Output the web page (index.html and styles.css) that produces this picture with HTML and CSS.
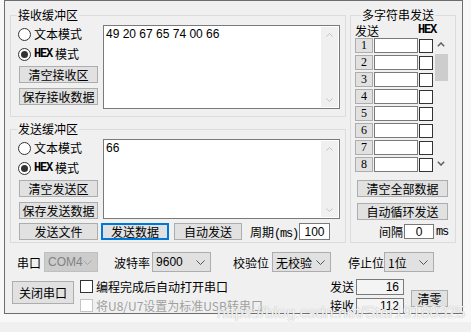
FILE: index.html
```html
<!DOCTYPE html>
<html>
<head>
<meta charset="utf-8">
<meta name="viewport" content="width=device-width, initial-scale=1.0">
<title>串口助手</title>
<link rel="stylesheet" href="styles.css">
</head>
<body>

<div class="frame">

<div class="top">
  <div class="left">

    <fieldset class="group recv">
      <legend>接收缓冲区</legend>
      <div class="pane">
        <div class="side">
          <div class="radio"><span class="dot"></span>文本模式</div>
          <div class="radio"><span class="dot on"></span><span class="sim">HEX</span>模式</div>
          <button class="btn b1">清空接收区</button>
          <button class="btn b2">保存接收数据</button>
        </div>
        <div class="textbox">
          <div class="text">49 20 67 65 74 00 66</div>
          <div class="vscroll">
            <svg width="7" height="4" viewBox="0 0 7 4"><polyline points="0.5,3.5 3.5,0.5 6.5,3.5"/></svg>
            <svg width="7" height="4" viewBox="0 0 7 4"><polyline points="0.5,0.5 3.5,3.5 6.5,0.5"/></svg>
          </div>
        </div>
      </div>
    </fieldset>

    <fieldset class="group send">
      <legend>发送缓冲区</legend>
      <div class="pane">
        <div class="side">
          <div class="radio"><span class="dot"></span>文本模式</div>
          <div class="radio"><span class="dot on"></span><span class="sim">HEX</span>模式</div>
          <button class="btn b1">清空发送区</button>
          <button class="btn b2">保存发送数据</button>
        </div>
        <div class="textbox">
          <div class="text">66</div>
          <div class="vscroll">
            <svg width="7" height="4" viewBox="0 0 7 4"><polyline points="0.5,3.5 3.5,0.5 6.5,3.5"/></svg>
            <svg width="7" height="4" viewBox="0 0 7 4"><polyline points="0.5,0.5 3.5,3.5 6.5,0.5"/></svg>
          </div>
        </div>
      </div>
      <div class="sendrow">
        <button class="btn file">发送文件</button>
        <button class="btn short focus">发送数据</button>
        <button class="btn short">自动发送</button>
        <span class="period">周期<span class="sim">(ms)</span></span>
        <input class="edit pval" value="100">
      </div>
    </fieldset>

  </div>

  <fieldset class="group multi">
    <legend>多字符串发送</legend>
    <div class="mhead"><span>发送</span><span class="sim hexh">HEX</span></div>
    <div class="mlist">
      <div class="rows">
        <div class="mrow"><span class="num">1</span><input class="edit mtext"><span class="check"></span></div>
        <div class="mrow"><span class="num">2</span><input class="edit mtext"><span class="check"></span></div>
        <div class="mrow"><span class="num">3</span><input class="edit mtext"><span class="check"></span></div>
        <div class="mrow"><span class="num">4</span><input class="edit mtext"><span class="check"></span></div>
        <div class="mrow"><span class="num">5</span><input class="edit mtext"><span class="check"></span></div>
        <div class="mrow"><span class="num">6</span><input class="edit mtext"><span class="check"></span></div>
        <div class="mrow"><span class="num">7</span><input class="edit mtext"><span class="check"></span></div>
        <div class="mrow"><span class="num">8</span><input class="edit mtext"><span class="check"></span></div>
      </div>
      <div class="mscroll">
        <svg class="up" width="8" height="5" viewBox="0 0 8 5"><polyline points="0.8,4.2 4,1 7.2,4.2"/></svg>
        <div class="thumb"></div>
        <svg class="down" width="8" height="5" viewBox="0 0 8 5"><polyline points="0.8,0.8 4,4 7.2,0.8"/></svg>
      </div>
    </div>
    <button class="btn mbtn first">清空全部数据</button>
    <button class="btn mbtn second">自动循环发送</button>
    <div class="interval"><span>间隔</span><input class="edit ival" value="0"><span class="sim">ms</span></div>
  </fieldset>
</div>

<div class="portrow">
  <span>串口</span>
  <div class="select dis com"><span class="sans">COM4</span><svg class="caret" width="9" height="5" viewBox="0 0 9 5"><polyline points="0.5,0.5 4.5,4.5 8.5,0.5"/></svg></div>
  <span class="lbl baud">波特率</span>
  <div class="select mid s-baud"><span class="sans">9600</span><svg class="caret" width="9" height="5" viewBox="0 0 9 5"><polyline points="0.5,0.5 4.5,4.5 8.5,0.5"/></svg></div>
  <span class="lbl parity">校验位</span>
  <div class="select mid s-parity"><span>无校验</span><svg class="caret" width="9" height="5" viewBox="0 0 9 5"><polyline points="0.5,0.5 4.5,4.5 8.5,0.5"/></svg></div>
  <span class="lbl stop">停止位</span>
  <div class="select s-stop"><span>1位</span><svg class="caret" width="9" height="5" viewBox="0 0 9 5"><polyline points="0.5,0.5 4.5,4.5 8.5,0.5"/></svg></div>
</div>

<div class="ctrlrow">
  <button class="btn close">关闭串口</button>
  <div class="checks">
    <div class="crow"><span class="check"></span>编程完成后自动打开串口</div>
    <div class="crow dis"><span class="check"></span>将U8/U7设置为标准USB转串口</div>
  </div>
  <div class="counters">
    <div class="cnt"><span>发送</span><input class="edit cval" value="16" readonly></div>
    <div class="cnt"><span>接收</span><input class="edit cval" value="112" readonly></div>
  </div>
  <button class="btn zero">清零</button>
</div>

<!-- watermark from the original screenshot -->
<div class="watermark">https://blog.csdn.net/Star19180325</div>

</div>

</body>
</html>
```

FILE: styles.css
```css
* {box-sizing: border-box;}

html {background: #f0f0f0;}

body {
  margin: 0;
  height: 322px;
  background: #f8f8f8;
  font-family: "Noto Sans CJK SC", sans-serif;
  font-size: 12px;
  color: #000;
}

.frame {
  position: relative;
  margin-left: 4px;
  width: 459px;
  height: 314px;
  border: 1px solid #6d6d6d;
  background: #f0f0f0;
}

.top {
  display: flex;
  gap: 4px;
  padding: 7px 0 0 5px;
}

.left {
  width: 336px;
  display: flex;
  flex-direction: column;
  gap: 5px;
}

/* group boxes */
.group {
  margin: 0;
  min-width: 0;
  border: 1px solid #dcdcdc;
  padding: 0 4px 0 7px;
}

.group legend {
  padding: 0 1px;
  margin-left: -1px;
  height: 14px;
  line-height: 14px;
}

.recv {height: 109px;}
.send {height: 121px;}

.multi {
  width: 106px;
  height: 235px;
  padding: 0 4px;
}

.multi legend {margin-left: 6px;}

.sim {
  font-family: "Liberation Mono", monospace;
  font-size: 12px;
  font-weight: bold;
  letter-spacing: -1.2px;
}

.sans {font-family: "Liberation Sans", sans-serif;}

.pane {
  display: flex;
  padding-top: 3px;
}

.side {
  width: 80px;
  margin-top: -1px;
  display: flex;
  flex-direction: column;
}

.radio {
  display: flex;
  align-items: center;
  gap: 3px;
  height: 20px;
  line-height: 14px;
}

.dot {
  width: 13px;
  height: 13px;
  border: 1px solid #333;
  border-radius: 50%;
  background: #fff;
  display: flex;
  align-items: center;
  justify-content: center;
}

.dot.on::after {
  content: "";
  width: 7px;
  height: 7px;
  border-radius: 50%;
  background: #333;
}

.btn {
  font-family: inherit;
  font-size: 12px;
  color: #000;
  background: #e1e1e1;
  border: 1px solid #adadad;
  padding: 0;
  margin: 0;
  height: 17px;
  line-height: 15px;
}

.side .btn {
  width: 79px;
  margin-left: 1px;
}

.side .b1 {margin-top: 2px;}
.side .b2 {margin-top: 5px;}

.textbox {
  margin-left: 5px;
  width: 237px;
  height: 84px;
  border: 1px solid #7a7a7a;
  background: #fff;
  padding: 1px;
  display: flex;
}

.send .textbox {height: 80px;}

.text {
  flex: 1;
  padding: 0 1px;
  font-family: "Liberation Sans", sans-serif;
  font-size: 12px;
  line-height: 14px;
}

.vscroll {
  width: 17px;
  background: #f0f0f0;
  display: flex;
  flex-direction: column;
  align-items: center;
  justify-content: space-between;
  padding: 6px 0 5px;
}

.vscroll polyline {
  fill: none;
  stroke: #c2c2c2;
}

.sendrow {
  display: flex;
  align-items: center;
  height: 17px;
  margin-top: 4px;
}

.file {
  width: 79px;
  margin-left: 1px;
}

.short {
  width: 68px;
  margin-left: 3px;
}

.short + .short {margin-left: 5px;}

.focus {
  border-color: #0078d7;
  box-shadow: inset 0 0 0 1px #0078d7;
}

.period {margin-left: 8px;}

.period .sim {font-weight: normal;}

.edit {
  font-family: "Liberation Sans", sans-serif;
  font-size: 12px;
  color: #000;
  border: 1px solid #7a7a7a;
  background: #fff;
  padding: 0 2px;
  margin: 0;
  height: 15px;
  outline: none;
}

.pval {
  width: 31px;
  height: 17px;
  margin-left: 1px;
  text-align: center;
}

/* multi string panel */
.mhead {
  display: flex;
  align-items: center;
  height: 13px;
  line-height: 13px;
  margin-top: 2px;
}

.hexh {margin-left: 39px;}

.mlist {
  display: flex;
  margin-top: 1px;
}

.rows {
  display: flex;
  flex-direction: column;
  gap: 2px;
}

.mrow {
  display: flex;
  align-items: center;
  gap: 1px;
  height: 15px;
}

.num {
  width: 18px;
  height: 15px;
  background: #e1e1e1;
  border: 1px solid #adadad;
  font-family: "Liberation Serif", serif;
  font-size: 12px;
  line-height: 13px;
  text-align: center;
}

.mtext {width: 44px;}

.check {
  width: 14px;
  height: 14px;
  border: 1px solid #333;
  background: #fff;
  flex: none;
}

.mscroll {
  width: 14px;
  height: 134px;
  margin-left: 1px;
  display: flex;
  flex-direction: column;
  align-items: center;
}

.mscroll polyline {
  fill: none;
  stroke: #606060;
  stroke-width: 1.5;
}

.mscroll .up {margin-top: 4px;}

.thumb {
  width: 13px;
  height: 27px;
  margin-top: 7px;
  background: #cdcdcd;
}

.mscroll .down {
  margin-top: auto;
  margin-bottom: 6px;
}

.mbtn {
  display: block;
  width: 91px;
  margin-left: 2px;
}

.mbtn.first {margin-top: 8px;}
.mbtn.second {margin-top: 6px;}

.interval {
  display: flex;
  align-items: center;
  height: 15px;
  margin-top: 4px;
  padding-left: 24px;
}

.ival {
  width: 30px;
  margin-left: 1px;
  text-align: center;
}

.interval .sim {
  margin-left: 2px;
  font-weight: normal;
}

/* port settings */
.portrow {
  display: flex;
  align-items: center;
  height: 20px;
  margin-top: 9px;
  padding-left: 12px;
}

.select {
  height: 20px;
  border: 1px solid #adadad;
  background: #e1e1e1;
  display: flex;
  align-items: center;
  justify-content: space-between;
  padding: 0 5px 0 3px;
}

.caret polyline {
  fill: none;
  stroke: #555;
}

.select.dis {
  background: #cccccc;
  border-color: #bfbfbf;
  color: #838383;
}

.select.dis .caret polyline {stroke: #a3a3a3;}

.com {
  width: 54px;
  margin-left: 3px;
}

.mid {width: 59px;}

.baud {margin-left: 16px;}
.s-baud {margin-left: 2px;}
.parity {margin-left: 22px;}
.s-parity {margin-left: 3px;}
.stop {margin-left: 17px;}

.s-stop {width: 50px;}

.ctrlrow {
  display: flex;
  margin-top: 5px;
  padding-left: 7px;
}

.close {
  width: 62px;
  height: 23px;
  margin-top: 4px;
}

.checks {
  width: 250px;
  margin-left: 6px;
  display: flex;
  flex-direction: column;
}

.crow {
  display: flex;
  align-items: center;
  gap: 3px;
  height: 19px;
}

.crow .check {
  width: 13px;
  height: 13px;
}

.crow.dis {color: #a0a0a0;}
.crow.dis .check {border-color: #c4c4c4;}

.counters {
  display: flex;
  flex-direction: column;
}

.cnt {
  display: flex;
  align-items: center;
  gap: 2px;
  height: 19px;
}

.cval {
  width: 48px;
  height: 16px;
  background: #f4f4f4;
  text-align: right;
  padding-right: 4px;
}

.zero {
  width: 37px;
  height: 17px;
  margin-left: 7px;
  margin-top: 13px;
}

.watermark {
  position: absolute;
  left: 212px;
  top: 303px;
  font-family: "Liberation Sans", sans-serif;
  font-size: 16px;
  color: rgba(255, 255, 255, 0.9);
  text-shadow: 0 0 1px #9a9a9a;
  white-space: nowrap;
}
```
